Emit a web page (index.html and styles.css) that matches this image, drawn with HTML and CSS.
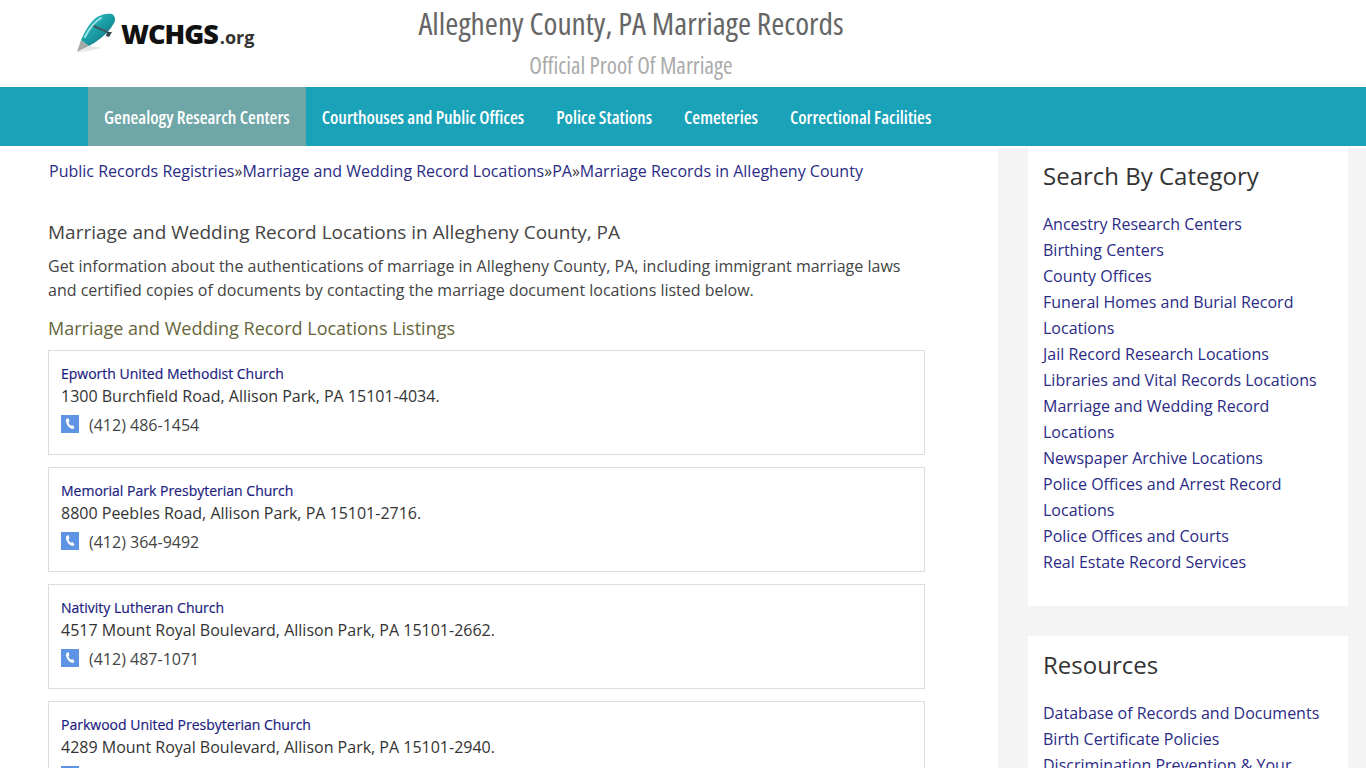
FILE: index.html
```html
<!DOCTYPE html>
<html lang="en">
<head>
    <meta charset="UTF-8" />
    <meta name="viewport" content="width=device-width, initial-scale=1.0"/>
    <title>Allegheny County, PA Marriage Records</title>
    <link rel="stylesheet" href="styles.css">
</head>
<body>
<header class="site-header">
    <a class="logo" href="#">
        <svg class="logo-pen" width="46" height="46" viewBox="0 0 46 46" aria-hidden="true">
            <defs>
                <linearGradient id="penBody" x1="0" y1="0" x2="1" y2="1">
                    <stop offset="0" stop-color="#45c6c8"/>
                    <stop offset="0.5" stop-color="#1a9ca6"/>
                    <stop offset="1" stop-color="#0c6470"/>
                </linearGradient>
            </defs>
            <path d="M7 45 L32 40 L20 38 Z" fill="#e6e6e6"/>
            <path d="M7 44 L11 32 L19 38 Z" fill="#a5a8a8"/>
            <path d="M11 32 C15 23 20 14 27 9 C32 6 38 5 42 6 C45 8 46 11 44 15 C41 21 36 26 31 30 C27 33 23 36 19 38 Z" fill="url(#penBody)"/>
            <path d="M21 18 L37 25 L38.5 23.5 L23 16.5 Z" fill="#3c5a60"/>
            <path d="M37 24 L42 24 L39 29 L36 28 Z" fill="#33484c"/>
            <path d="M15 29 C19 21 24 14 31 10" stroke="#9be8e6" stroke-width="2" fill="none" stroke-linecap="round"/>
        </svg>
        <span class="logo-name">WCHGS</span><span class="logo-org">.org</span>
    </a>
    <div class="site-title">
        <h1>Allegheny County, PA Marriage Records</h1>
        <p>Official Proof Of Marriage</p>
    </div>
</header>

<nav class="main-nav">
    <a class="active" href="#">Genealogy Research Centers</a>
    <a href="#">Courthouses and Public Offices</a>
    <a href="#">Police Stations</a>
    <a href="#">Cemeteries</a>
    <a href="#">Correctional Facilities</a>
</nav>

<div class="page">
    <main class="content">
        <div class="breadcrumb">
            <a href="#">Public Records Registries</a>»<a href="#">Marriage and Wedding Record Locations</a>»<a href="#">PA</a>»<a href="#">Marriage Records in Allegheny County</a>
        </div>

        <h2>Marriage and Wedding Record Locations in Allegheny County, PA</h2>
        <p class="intro">Get information about the authentications of marriage in Allegheny County, PA, including immigrant marriage laws and certified copies of documents by contacting the marriage document locations listed below.</p>

        <h3>Marriage and Wedding Record Locations Listings</h3>

        <div class="listing">
            <a class="listing-name" href="#">Epworth United Methodist Church</a>
            <div class="listing-address">1300 Burchfield Road, Allison Park, PA 15101-4034.</div>
            <div class="listing-phone">
                <svg class="phone-icon" viewBox="0 0 18 18" aria-hidden="true"><rect width="18" height="18" fill="#5f93e3"/><path d="M6 3.6 L7.6 3.2 L8.5 6.2 L7.4 7.2 C7.8 8.6 8.9 10 10.1 10.8 L11.3 10 L13.6 12.2 L12.6 13.6 C11.6 14.3 10.2 13.9 8.8 12.8 C6.8 11.2 5.2 8.6 5 6.2 C4.9 5 5.3 4.2 6 3.6 Z" fill="#fff"/></svg>
                <span>(412) 486-1454</span>
            </div>
        </div>

        <div class="listing">
            <a class="listing-name" href="#">Memorial Park Presbyterian Church</a>
            <div class="listing-address">8800 Peebles Road, Allison Park, PA 15101-2716.</div>
            <div class="listing-phone">
                <svg class="phone-icon" viewBox="0 0 18 18" aria-hidden="true"><rect width="18" height="18" fill="#5f93e3"/><path d="M6 3.6 L7.6 3.2 L8.5 6.2 L7.4 7.2 C7.8 8.6 8.9 10 10.1 10.8 L11.3 10 L13.6 12.2 L12.6 13.6 C11.6 14.3 10.2 13.9 8.8 12.8 C6.8 11.2 5.2 8.6 5 6.2 C4.9 5 5.3 4.2 6 3.6 Z" fill="#fff"/></svg>
                <span>(412) 364-9492</span>
            </div>
        </div>

        <div class="listing">
            <a class="listing-name" href="#">Nativity Lutheran Church</a>
            <div class="listing-address">4517 Mount Royal Boulevard, Allison Park, PA 15101-2662.</div>
            <div class="listing-phone">
                <svg class="phone-icon" viewBox="0 0 18 18" aria-hidden="true"><rect width="18" height="18" fill="#5f93e3"/><path d="M6 3.6 L7.6 3.2 L8.5 6.2 L7.4 7.2 C7.8 8.6 8.9 10 10.1 10.8 L11.3 10 L13.6 12.2 L12.6 13.6 C11.6 14.3 10.2 13.9 8.8 12.8 C6.8 11.2 5.2 8.6 5 6.2 C4.9 5 5.3 4.2 6 3.6 Z" fill="#fff"/></svg>
                <span>(412) 487-1071</span>
            </div>
        </div>

        <div class="listing">
            <a class="listing-name" href="#">Parkwood United Presbyterian Church</a>
            <div class="listing-address">4289 Mount Royal Boulevard, Allison Park, PA 15101-2940.</div>
            <div class="listing-phone">
                <svg class="phone-icon" viewBox="0 0 18 18" aria-hidden="true"><rect width="18" height="18" fill="#5f93e3"/><path d="M6 3.6 L7.6 3.2 L8.5 6.2 L7.4 7.2 C7.8 8.6 8.9 10 10.1 10.8 L11.3 10 L13.6 12.2 L12.6 13.6 C11.6 14.3 10.2 13.9 8.8 12.8 C6.8 11.2 5.2 8.6 5 6.2 C4.9 5 5.3 4.2 6 3.6 Z" fill="#fff"/></svg>
                <span>(412) 487-1071</span>
            </div>
        </div>
    </main>

    <aside class="sidebar">
        <section class="widget">
            <h4>Search By Category</h4>
            <ul>
                <li><a href="#">Ancestry Research Centers</a></li>
                <li><a href="#">Birthing Centers</a></li>
                <li><a href="#">County Offices</a></li>
                <li><a href="#">Funeral Homes and Burial Record Locations</a></li>
                <li><a href="#">Jail Record Research Locations</a></li>
                <li><a href="#">Libraries and Vital Records Locations</a></li>
                <li><a href="#">Marriage and Wedding Record Locations</a></li>
                <li><a href="#">Newspaper Archive Locations</a></li>
                <li><a href="#">Police Offices and Arrest Record Locations</a></li>
                <li><a href="#">Police Offices and Courts</a></li>
                <li><a href="#">Real Estate Record Services</a></li>
            </ul>
        </section>
        <section class="widget">
            <h4>Resources</h4>
            <ul>
                <li><a href="#">Database of Records and Documents</a></li>
                <li><a href="#">Birth Certificate Policies</a></li>
                <li><a href="#">Discrimination Prevention &amp; Your Rights</a></li>
            </ul>
        </section>
    </aside>
</div>
</body>
</html>
```

FILE: styles.css
```css
html, body {
  height: 768px;
  overflow: hidden;
}

body {
  margin: 0;
  font-family: "Open Sans", sans-serif;
  font-size: 16px;
  line-height: 24px;
  color: #333;
  background: #fff;
}

a {
  color: #2b2b85;
  text-decoration: none;
}

.site-header {
  display: flex;
  height: 87px;
}

.logo {
  display: flex;
  align-items: baseline;
  width: 255px;
  padding: 8px 0 0 70px;
  box-sizing: border-box;
  color: #111;
  font-weight: 800;
}

.logo-pen {
  align-self: flex-start;
  margin-right: 5px;
}

.logo-name {
  font-size: 27px;
  line-height: 52px;
  letter-spacing: -1px;
}

.logo-org {
  margin-left: 2px;
  font-size: 18px;
  font-weight: bold;
  color: #333;
}

.site-title {
  width: 600px;
  margin-left: 76px;
  text-align: center;
  font-stretch: 75%;
}

.site-title h1 {
  margin: 4px 0 0;
  font-size: 31.6px;
  line-height: 38px;
  font-weight: normal;
  color: #666;
}

.site-title p {
  margin: 8px 0 0;
  font-size: 23.2px;
  line-height: 30px;
  color: #aaa;
}

.main-nav {
  display: flex;
  height: 59px;
  padding-left: 88px;
  background: #1aa2b8;
  font-stretch: 75%;
  font-size: 18px;
  font-weight: 600;
}

.main-nav a {
  padding: 0 16px;
  line-height: 60px;
  color: #fff;
}

.main-nav a.active {
  background: #6fa6a8;
}

.page {
  display: flex;
  align-items: flex-start;
  height: 622px;
}

.content {
  width: 877px;
  margin-left: 48px;
}

.breadcrumb {
  margin: 13px 0 0 1px;
  white-space: nowrap;
}

h2 {
  margin: 36px 0 0;
  font-size: 19px;
  line-height: 26px;
  font-weight: normal;
  color: #444;
}

.intro {
  margin: 9px 0 0;
  color: #444;
}

h3 {
  margin: 13px 0 0;
  font-size: 18px;
  line-height: 26px;
  font-weight: normal;
  color: #66663a;
}

.listing {
  height: 105px;
  box-sizing: border-box;
  margin-top: 12px;
  padding: 12px 12px 0;
  border: 1px solid #ddd;
}

h3 + .listing {
  margin-top: 9px;
}

.listing-name {
  display: block;
  font-size: 14px;
  line-height: 22px;
  font-weight: 500;
  -webkit-text-stroke: 0.2px #1c1c80;
  color: #1c1c80;
}

.listing-address {
  line-height: 22px;
}

.listing-phone {
  display: flex;
  align-items: center;
  gap: 10px;
  margin-top: 6px;
  color: #444;
}

.phone-icon {
  width: 18px;
  height: 18px;
  margin-top: -2px;
}

.sidebar {
  width: 320px;
  height: 620px;
  margin: 2px 0 0 73px;
  padding: 0 18px 0 30px;
  background: #f4f4f4;
}

.widget {
  padding: 13px 15px 31px;
  margin-bottom: 30px;
  background: #fff;
}

.widget:first-child {
  padding-top: 12px;
}

.widget h4 {
  margin: 0 0 19px;
  font-size: 24px;
  line-height: 32px;
  font-weight: normal;
  color: #333;
}

.widget ul {
  margin: 0;
  padding: 0;
  list-style: none;
}

.widget li {
  line-height: 26px;
}
```
